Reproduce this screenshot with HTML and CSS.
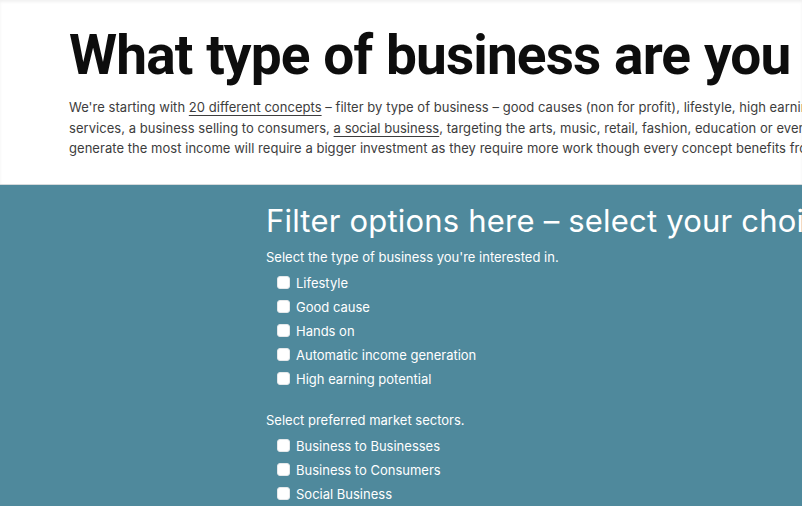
FILE: index.html
```html
<!DOCTYPE html>
<html lang="en">
<head>
<meta charset="utf-8">
<title>What type of business are you</title>
<link rel="stylesheet" href="styles.css">
</head>
<body>
<header class="intro">
  <h1 class="intro-title">What type of business are you looking to start?</h1>
  <p class="intro-text">We're starting with <a href="#">20 different concepts</a> – filter by type of business – good causes (non for profit), lifestyle, high earning potential and automatic income.<br>services, a business selling to consumers, <a href="#">a social business</a>, targeting the arts, music, retail, fashion, education or even technology.<br>generate the most income will require a bigger investment as they require more work though every concept benefits from a strong plan.</p>
</header>
<section class="filters">
  <h2 class="filters-title">Filter options here – select your choices below</h2>
  <div class="group">
    <p class="group-label">Select the type of business you're interested in.</p>
    <label class="option"><input type="checkbox" class="box"><span>Lifestyle</span></label>
    <label class="option"><input type="checkbox" class="box"><span>Good cause</span></label>
    <label class="option"><input type="checkbox" class="box"><span>Hands on</span></label>
    <label class="option"><input type="checkbox" class="box"><span>Automatic income generation</span></label>
    <label class="option"><input type="checkbox" class="box"><span>High earning potential</span></label>
  </div>
  <div class="group">
    <p class="group-label">Select preferred market sectors.</p>
    <label class="option"><input type="checkbox" class="box"><span>Business to Businesses</span></label>
    <label class="option"><input type="checkbox" class="box"><span>Business to Consumers</span></label>
    <label class="option"><input type="checkbox" class="box"><span>Social Business</span></label>
    <label class="option"><input type="checkbox" class="box"><span>Arts and culture</span></label>
  </div>
</section>
</body>
</html>
```

FILE: styles.css
```css
html, body {
  margin: 0;
  padding: 0;
  overflow: hidden;
}
body {
  font-family: Inter, "DejaVu Sans", sans-serif;
  background: #4f899c;
  width: 802px;
  height: 506px;
}
.intro {
  background: #ffffff;
  padding: 22px 0 25px 69px;
  box-shadow: inset 0 2px 3px rgba(0, 0, 0, 0.06);
  border-bottom: 1px solid #d6dadc;
  white-space: nowrap;
}
.intro-title {
  margin: 0 0 8px;
  font-family: Roboto, Inter, sans-serif;
  font-size: 55px;
  line-height: 67px;
  font-weight: 700;
  color: #0d0d0d;
  letter-spacing: -0.9px;
  word-spacing: 1px;
}
.intro-text {
  margin: 0;
  font-size: 13px;
  line-height: 20.5px;
  color: #3d3d3d;
  letter-spacing: 0.04px;
}
.intro-text a {
  color: #3d3d3d;
  text-decoration: underline;
  text-underline-offset: 3px;
}
.filters {
  padding: 17px 0 0 266px;
  color: #ffffff;
  white-space: nowrap;
}
.filters-title {
  margin: 0 0 8px;
  font-size: 31px;
  line-height: 37px;
  font-weight: 400;
  letter-spacing: 0.2px;
}
.group {
  display: flex;
  flex-direction: column;
  margin-bottom: 19px;
}
.group-label {
  margin: 0 0 4px;
  font-size: 13px;
  line-height: 20px;
}
.option {
  display: flex;
  align-items: center;
  gap: 6px;
  height: 24px;
  padding-left: 11px;
  font-size: 13px;
}
.box {
  appearance: none;
  -webkit-appearance: none;
  margin: 0;
  width: 13px;
  height: 13px;
  background: #ffffff;
  border: 1px solid #e4e8ea;
  border-radius: 3px;
  flex: none;
}
```
